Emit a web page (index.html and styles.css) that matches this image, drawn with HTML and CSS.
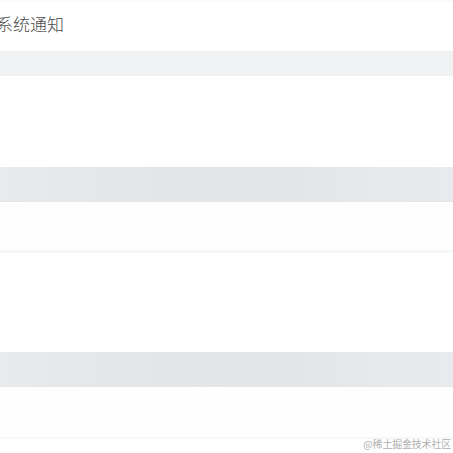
FILE: index.html
```html
<!DOCTYPE html>
<html lang="zh">
<head>
<meta charset="utf-8">
<title>系统通知</title>
<link rel="stylesheet" href="styles.css">
</head>
<body>
<div class="page">
  <header class="header"><span class="title">系统通知</span></header>
  <div class="band band-light"></div>
  <div class="gap gap-91"></div>
  <div class="band band-shimmer"></div>
  <div class="row row-48"></div>
  <div class="gap gap-99"></div>
  <div class="band band-shimmer"></div>
  <div class="row row-50"></div>
  <div class="rest"></div>
  <div class="watermark">@稀土掘金技术社区</div>
</div>
</body>
</html>
```
FILE: styles.css
```css
html, body {
  margin: 0;
  padding: 0;
  background: #ffffff;
}
.page {
  position: relative;
  width: 453px;
  height: 453px;
  overflow: hidden;
  display: flex;
  flex-direction: column;
  font-family: "Noto Sans CJK SC", "Noto Sans", sans-serif;
}
.header {
  height: 51px;
  flex: none;
  display: flex;
  align-items: center;
  background: #ffffff;
  border-top: 2px solid #fafafa;
  box-sizing: border-box;
}
.title {
  margin-left: -4px;
  font-size: 17px;
  font-weight: 300;
  color: #4a4a4a;
  line-height: 1;
  margin-top: -7px;
}
.band {
  flex: none;
}
.band-light {
  height: 25px;
  background: #f1f2f4;
  border-top: 1px solid #eceef0;
  box-sizing: border-box;
}
.band-shimmer {
  height: 35px;
  background: linear-gradient(90deg, #e9eaed 0%, #e6e7ea 20%, #e3e4e8 45%, #e4e5e9 65%, #e8e9ec 85%, #e9eaed 100%);
  border-bottom: 1px solid #e6e7ea;
  box-sizing: border-box;
}
.gap { flex: none; background: #ffffff; }
.gap-91 { height: 91px; }
.gap-99 { height: 99px; }
.row {
  flex: none;
  background: #fefefe;
  border-bottom: 3px solid #f6f7f8;
  box-sizing: border-box;
}
.row-48 { height: 51px; }
.row-50 { height: 52px; border-bottom-width: 2px; }
.rest { flex: 1; background: #ffffff; }
.watermark {
  position: absolute;
  right: 2px;
  bottom: 3px;
  font-size: 10px;
  line-height: 12px;
  color: #b0b0b0;
  font-family: "Noto Sans CJK SC", sans-serif;
  letter-spacing: -0.2px;
}
```
